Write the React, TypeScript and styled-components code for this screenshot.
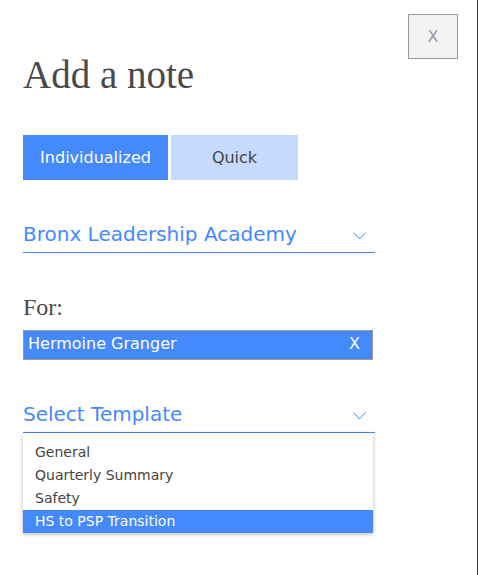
import { FC } from "react";
import styled, { createGlobalStyle } from "styled-components";

const blue = "#4589ff";
const lightBlue = "#c6dafe";
const textGray = "#4a4a4a";
const sans = `"DejaVu Sans", Verdana, sans-serif`;
const serif = `"Liberation Serif", Georgia, serif`;

const GlobalStyle = createGlobalStyle`
  html, body {
    margin: 0;
    padding: 0;
    background: #fff;
  }
  * {
    box-sizing: border-box;
  }
`;

const Panel = styled.div`
  width: 478px;
  min-height: 575px;
  border-right: 1px solid #444;
  padding: 14px 19px 0 23px;
  display: flex;
  flex-direction: column;
`;

const Header = styled.div`
  display: flex;
  justify-content: space-between;
  align-items: flex-start;
`;

const Title = styled.h1`
  margin: 41px 0 0;
  font-family: ${serif};
  font-weight: 400;
  font-size: 39px;
  line-height: 39px;
  color: ${textGray};
`;

const CloseButton = styled.button`
  width: 50px;
  height: 45px;
  border: 1px solid #9a9a9a;
  background: #f2f2f2;
  color: #9a9a9a;
  font-family: ${sans};
  font-size: 16px;
  padding: 0;
  cursor: pointer;
`;

const Tabs = styled.div`
  display: flex;
  gap: 3px;
  margin-top: 41px;
`;

const Tab = styled.button<{ $active?: boolean; $width: number }>`
  width: ${(p) => p.$width}px;
  height: 45px;
  border: none;
  padding: 0;
  font-family: ${sans};
  font-size: 16px;
  background: ${(p) => (p.$active ? blue : lightBlue)};
  color: ${(p) => (p.$active ? "#fff" : "#444")};
  cursor: pointer;
`;

const SelectWrap = styled.div<{ $top: number }>`
  position: relative;
  width: 352px;
  margin-top: ${(p) => p.$top}px;
`;

const SelectBox = styled.div`
  display: flex;
  align-items: center;
  justify-content: space-between;
  padding: 0 9px 6px 0;
  border-bottom: 1px solid ${blue};
  font-family: ${sans};
  font-size: 20px;
  line-height: 24px;
  color: ${blue};
`;

const Chevron = styled.svg`
  width: 13px;
  height: 8px;
  margin-top: 3px;
`;

const Label = styled.div`
  margin-top: 40px;
  font-family: ${serif};
  font-size: 24px;
  line-height: 28px;
  color: ${textGray};
`;

const Chip = styled.div`
  display: flex;
  justify-content: space-between;
  width: 350px;
  height: 30px;
  margin-top: 9px;
  padding: 0 12px 2px 4px;
  background: ${blue};
  border: 1px solid #999;
  font-family: ${sans};
  font-size: 16px;
  line-height: 26px;
  color: #fff;
`;

const Menu = styled.ul`
  position: absolute;
  top: 100%;
  left: 0;
  width: 350px;
  margin: 0;
  padding: 8px 0 0;
  list-style: none;
  background: #fff;
  box-shadow: 0 1px 4px rgba(0, 0, 0, 0.3);
  z-index: 2;
`;

const MenuItem = styled.li<{ $selected?: boolean }>`
  height: 23px;
  padding-left: 12px;
  font-family: ${sans};
  font-size: 14px;
  line-height: 23px;
  color: ${(p) => (p.$selected ? "#fff" : "#444")};
  background: ${(p) => (p.$selected ? blue : "transparent")};
`;

const ChevronIcon: FC = () => (
  <Chevron viewBox="0 0 13 8" fill="none">
    <path d="M0.5 0.5 L6.5 7 L12.5 0.5" stroke={blue} strokeWidth="1" />
  </Chevron>
);

const templates = ["General", "Quarterly Summary", "Safety", "HS to PSP Transition"];

const App: FC = () => {
  return (
    <>
      <GlobalStyle />
      <Panel>
        <Header>
          <Title>Add a note</Title>
          <CloseButton>X</CloseButton>
        </Header>
        <Tabs>
          <Tab $active $width={145}>
            Individualized
          </Tab>
          <Tab $width={127}>Quick</Tab>
        </Tabs>
        <SelectWrap $top={42}>
          <SelectBox>
            <span>Bronx Leadership Academy</span>
            <ChevronIcon />
          </SelectBox>
        </SelectWrap>
        <Label>For:</Label>
        <Chip>
          <span>Hermoine Granger</span>
          <span>X</span>
        </Chip>
        <SelectWrap $top={42}>
          <SelectBox>
            <span>Select Template</span>
            <ChevronIcon />
          </SelectBox>
          <Menu>
            {templates.map((t, i) => (
              <MenuItem key={t} $selected={i === templates.length - 1}>
                {t}
              </MenuItem>
            ))}
          </Menu>
        </SelectWrap>
      </Panel>
    </>
  );
};

export default App;
